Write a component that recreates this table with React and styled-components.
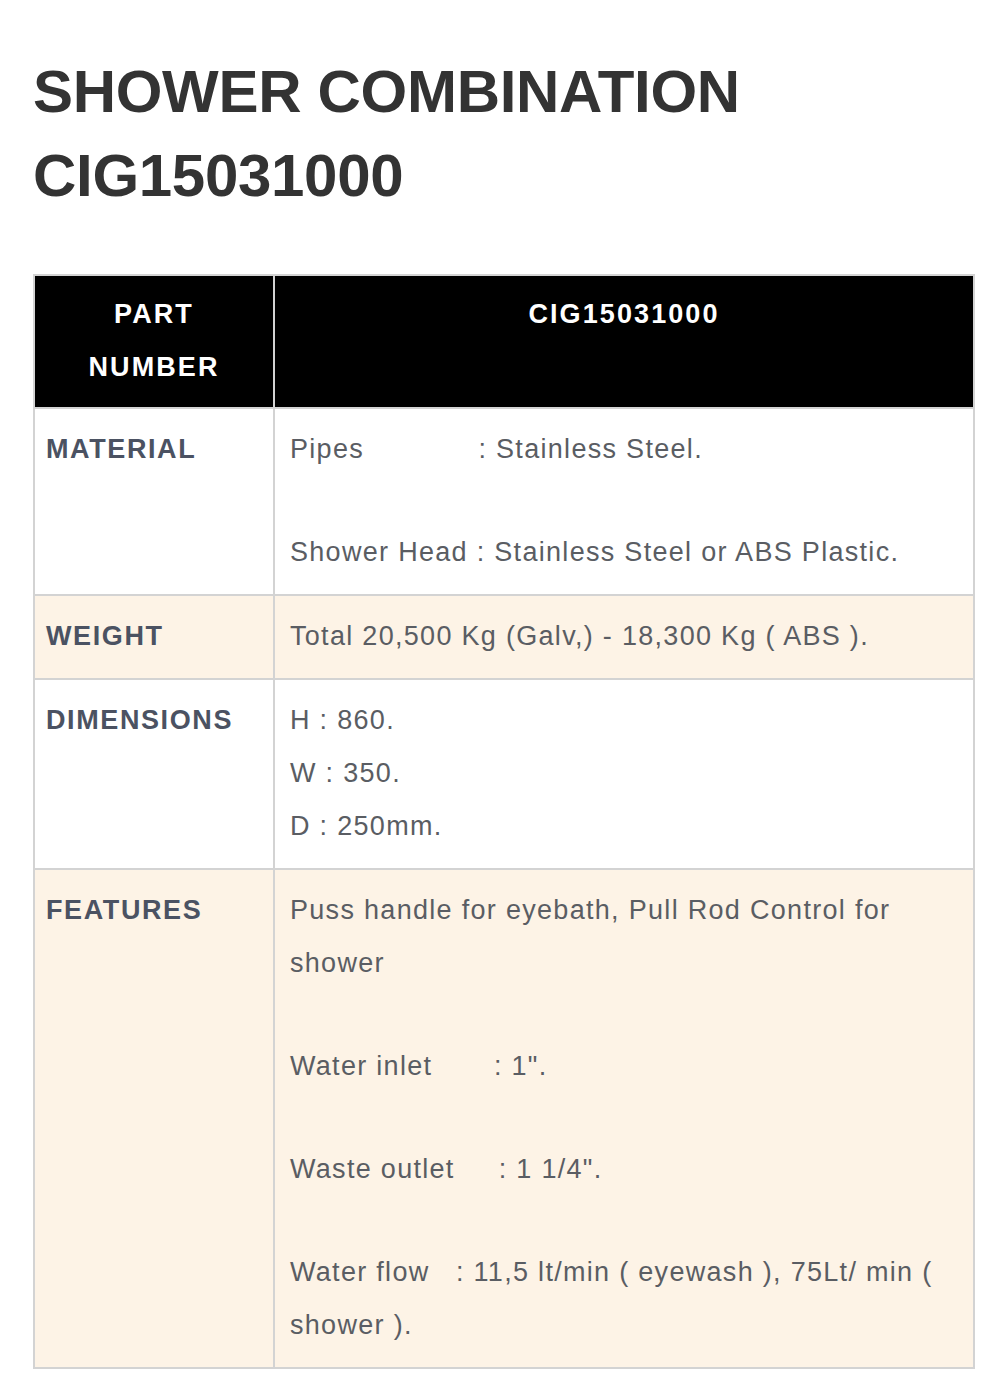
import React from "react";
import styled, { createGlobalStyle } from "styled-components";

const Global = createGlobalStyle`
  html, body { margin: 0; padding: 0; background: #fff; }
  body { font-family: "Liberation Sans", Arial, sans-serif; }
`;

const Page = styled.div`
  padding: 50px 25px 27px 33px;
`;

const Title = styled.h1`
  margin: 0 0 56px;
  font-size: 60px;
  line-height: 84px;
  font-weight: 700;
  color: #333;
  letter-spacing: -0.3px;
`;

const Table = styled.table`
  width: 942px;
  border-collapse: collapse;
  border: 2px solid #d3d3d3;
  font-size: 27px;
  line-height: 53px;
`;

const HeadCell = styled.th`
  background: #000;
  color: #fff;
  font-weight: 700;
  text-align: center;
  vertical-align: top;
  padding: 12px 10px 13px;
  border: 2px solid #d3d3d3;
  width: ${(p) => (p.$narrow ? "218px" : "auto")};
  letter-spacing: 2.1px;
`;

const Row = styled.tr`
  background: ${(p) => (p.$alt ? "#fdf3e6" : "#fff")};
`;

const Label = styled.td`
  vertical-align: top;
  font-weight: 700;
  color: #4b5262;
  padding: 14px 8px 15px 11px;
  border: 2px solid #d3d3d3;
  letter-spacing: 1.6px;
`;

const Value = styled.td`
  vertical-align: top;
  color: #5a5d63;
  padding: 14px 15px 15px;
  border: 2px solid #d3d3d3;
  letter-spacing: 1.3px;
`;

const Para = styled.div`
  white-space: pre-wrap;
  margin-bottom: ${(p) => (p.$gap ? "50px" : "0")};
`;

export default function App() {
  return (
    <>
      <Global />
      <Page>
        <Title>
          SHOWER COMBINATION
          <br />
          CIG15031000
        </Title>
        <Table>
          <thead>
            <tr>
              <HeadCell $narrow>
                PART
                <br />
                NUMBER
              </HeadCell>
              <HeadCell>CIG15031000</HeadCell>
            </tr>
          </thead>
          <tbody>
            <Row>
              <Label>MATERIAL</Label>
              <Value>
                <Para $gap>{"Pipes             : Stainless Steel."}</Para>
                <Para>Shower Head : Stainless Steel or ABS Plastic.</Para>
              </Value>
            </Row>
            <Row $alt>
              <Label>WEIGHT</Label>
              <Value>
                <Para>Total 20,500 Kg (Galv,) - 18,300 Kg ( ABS ).</Para>
              </Value>
            </Row>
            <Row>
              <Label>DIMENSIONS</Label>
              <Value>
                <Para>H : 860.</Para>
                <Para>W : 350.</Para>
                <Para>D : 250mm.</Para>
              </Value>
            </Row>
            <Row $alt>
              <Label>FEATURES</Label>
              <Value>
                <Para $gap>Puss handle for eyebath, Pull Rod Control for shower</Para>
                <Para $gap>{"Water inlet       : 1\"."}</Para>
                <Para $gap>{"Waste outlet     : 1 1/4\"."}</Para>
                <Para>{"Water flow   : 11,5 lt/min ( eyewash ), 75Lt/ min ( shower )."}</Para>
              </Value>
            </Row>
          </tbody>
        </Table>
      </Page>
    </>
  );
}
